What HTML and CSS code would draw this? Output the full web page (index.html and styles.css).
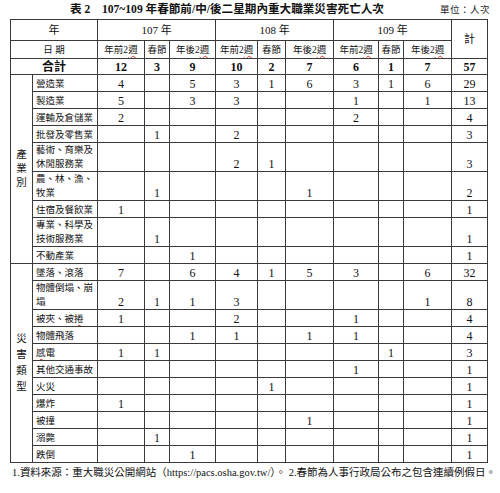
FILE: index.html
```html
<!DOCTYPE html>
<html lang="zh-Hant">
<head>
<meta charset="utf-8">
<link rel="stylesheet" href="styles.css">
</head>
<body>
<div class="page">
  <div class="title-bar">
    <div class="title">表 2　107~109 年春節前/中/後二星期內重大職業災害死亡人次</div>
    <div class="unit">單位：人次</div>
  </div>
  <table class="grid">
    <colgroup>
      <col class="c-cat"><col class="c-lab"><col class="c-a1"><col class="c-a2"><col class="c-a3"><col class="c-b1"><col class="c-b2"><col class="c-b3"><col class="c-c1"><col class="c-c2"><col class="c-c3"><col class="c-tot">
    </colgroup>
    <tr class="h1"><td colspan="2">年</td><td colspan="3">107 年</td><td colspan="3">108 年</td><td colspan="3">109 年</td><td rowspan="2" class="mid">計</td></tr>
    <tr class="h2"><td colspan="2">日 期</td><td>年前2<span class="sp">週</span></td><td>春節</td><td>年後2<span class="sp">週</span></td><td>年前2<span class="sp">週</span></td><td>春節</td><td>年後2<span class="sp">週</span></td><td>年前2<span class="sp">週</span></td><td>春節</td><td>年後2<span class="sp">週</span></td></tr>
    <tr class="h3 bold"><td colspan="2">合計</td><td>12</td><td>3</td><td>9</td><td>10</td><td>2</td><td>7</td><td>6</td><td>1</td><td>7</td><td>57</td></tr>
    <tr><td rowspan="9" class="cat">產<br>業<br>別</td><td class="lab">營造業</td><td>4</td><td></td><td>5</td><td>3</td><td>1</td><td>6</td><td>3</td><td>1</td><td>6</td><td>29</td></tr>
    <tr><td class="lab">製造業</td><td>5</td><td></td><td>3</td><td>3</td><td></td><td></td><td>1</td><td></td><td>1</td><td>13</td></tr>
    <tr><td class="lab">運輸及倉儲業</td><td>2</td><td></td><td></td><td></td><td></td><td></td><td>2</td><td></td><td></td><td>4</td></tr>
    <tr><td class="lab">批發及零售業</td><td></td><td>1</td><td></td><td>2</td><td></td><td></td><td></td><td></td><td></td><td>3</td></tr>
    <tr class="dbl"><td class="lab">藝術、育樂及<br>休閒服務業</td><td></td><td></td><td></td><td>2</td><td>1</td><td></td><td></td><td></td><td></td><td>3</td></tr>
    <tr class="dbl"><td class="lab">農、林、漁、<br>牧業</td><td></td><td>1</td><td></td><td></td><td></td><td>1</td><td></td><td></td><td></td><td>2</td></tr>
    <tr><td class="lab">住宿及餐飲業</td><td>1</td><td></td><td></td><td></td><td></td><td></td><td></td><td></td><td></td><td>1</td></tr>
    <tr class="dbl"><td class="lab">專業、科學及<br>技術服務業</td><td></td><td>1</td><td></td><td></td><td></td><td></td><td></td><td></td><td></td><td>1</td></tr>
    <tr><td class="lab">不動產業</td><td></td><td></td><td>1</td><td></td><td></td><td></td><td></td><td></td><td></td><td>1</td></tr>
    <tr><td rowspan="11" class="cat cat2">災<br>害<br>類<br>型</td><td class="lab">墜落、滾落</td><td>7</td><td></td><td>6</td><td>4</td><td>1</td><td>5</td><td>3</td><td></td><td>6</td><td>32</td></tr>
    <tr class="dbl"><td class="lab">物體倒塌、崩<br>塌</td><td>2</td><td>1</td><td>1</td><td>3</td><td></td><td></td><td></td><td></td><td>1</td><td>8</td></tr>
    <tr><td class="lab">被夾、被<span class="sp">捲</span></td><td>1</td><td></td><td></td><td>2</td><td></td><td></td><td>1</td><td></td><td></td><td>4</td></tr>
    <tr><td class="lab">物體飛落</td><td></td><td></td><td>1</td><td>1</td><td></td><td>1</td><td>1</td><td></td><td></td><td>4</td></tr>
    <tr><td class="lab"><span class="sp">感</span>電</td><td>1</td><td>1</td><td></td><td></td><td></td><td></td><td></td><td>1</td><td></td><td>3</td></tr>
    <tr><td class="lab">其他交通事故</td><td></td><td></td><td></td><td></td><td></td><td></td><td>1</td><td></td><td></td><td>1</td></tr>
    <tr><td class="lab">火災</td><td></td><td></td><td></td><td></td><td>1</td><td></td><td></td><td></td><td></td><td>1</td></tr>
    <tr><td class="lab">爆炸</td><td>1</td><td></td><td></td><td></td><td></td><td></td><td></td><td></td><td></td><td>1</td></tr>
    <tr><td class="lab">被撞</td><td></td><td></td><td></td><td></td><td></td><td>1</td><td></td><td></td><td></td><td>1</td></tr>
    <tr><td class="lab">溺斃</td><td></td><td>1</td><td></td><td></td><td></td><td></td><td></td><td></td><td></td><td>1</td></tr>
    <tr><td class="lab">跌倒</td><td></td><td></td><td>1</td><td></td><td></td><td></td><td></td><td></td><td></td><td>1</td></tr>
  </table>
  <div class="note">1.資料來源：重大職災公開網站（https://pacs.osha.gov.tw/）。 2.春節為人事行政局公布之包含連續例假日。</div>
</div>
</body>
</html>
```
FILE: styles.css
```css
html, body {
  margin: 0;
  padding: 0;
  background: #ffffff;
}
body {
  font-family: "Liberation Serif", "Noto Sans CJK TC", serif;
  color: #111111;
}
.page {
  width: 500px;
}
.title-bar {
  display: flex;
  align-items: flex-end;
  height: 19px;
  box-sizing: border-box;
  padding-bottom: 2px;
}
.title {
  padding-left: 70px;
  font-size: 11.6px;
  font-weight: bold;
  line-height: 15px;
}
.unit {
  margin-left: auto;
  padding-right: 10px;
  font-size: 9.5px;
  line-height: 14px;
  color: #222;
  letter-spacing: 0.5px;
}
.grid {
  margin-left: 10px;
  border-collapse: collapse;
  table-layout: fixed;
  width: 477px;
}
.c-cat { width: 22px; }
.c-lab { width: 65px; }
.c-a1 { width: 47px; }
.c-a2 { width: 25px; }
.c-a3 { width: 46px; }
.c-b1 { width: 42px; }
.c-b2 { width: 28px; }
.c-b3 { width: 48px; }
.c-c1 { width: 45px; }
.c-c2 { width: 25px; }
.c-c3 { width: 48px; }
.c-tot { width: 36px; }
.grid td {
  border: 1px solid #3a3a3a;
  padding: 0;
  height: 16px;
  font-size: 12px;
  line-height: 14px;
  text-align: center;
  vertical-align: bottom;
  overflow: hidden;
  white-space: nowrap;
}
.grid tr.dbl td {
  height: 28px;
}
.grid tr.h1 td {
  height: 20px;
  vertical-align: middle;
  font-size: 11px;
}
.grid tr.h2 td {
  height: 17px;
  vertical-align: middle;
  font-size: 9.5px;
}
.grid tr.h3 td {
  height: 15px;
  vertical-align: middle;
}
.grid td.mid {
  vertical-align: middle;
  font-size: 10.5px;
}
.bold td {
  font-weight: bold;
}
.grid td.lab {
  text-align: left;
  padding-left: 3px;
  font-size: 9.5px;
  line-height: 14px;
}
.grid td.cat {
  vertical-align: middle;
  font-size: 10.5px;
  line-height: 14px;
}
.grid td.cat2 {
  line-height: 16px;
}
.sp {
  text-decoration: underline wavy #d0342c;
  text-decoration-thickness: 1px;
  text-underline-offset: 2px;
}
.note {
  padding-left: 12px;
  padding-top: 3px;
  font-size: 10.5px;
  line-height: 14px;
  white-space: nowrap;
}
```
